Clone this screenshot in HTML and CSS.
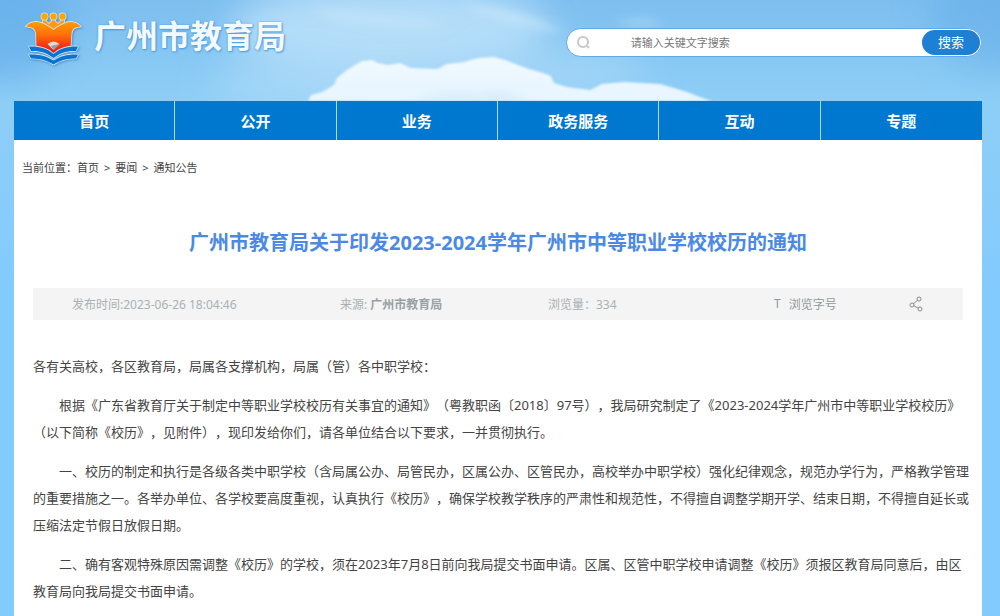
FILE: index.html
```
<!DOCTYPE html>
<html lang="zh-CN">
<head>
    <meta charset="UTF-8">
    <meta name="viewport" content="width=device-width, initial-scale=1.0">
    <title>广州市教育局</title>
    <link rel="stylesheet" href="styles.css">
</head>
<body>
    <!-- 天空背景 -->
    <svg class="sky" viewBox="0 0 1000 101" preserveAspectRatio="xMidYMin slice" aria-hidden="true">
        <defs>
            <filter id="haze" x="-50%" y="-100%" width="200%" height="300%"><feGaussianBlur stdDeviation="18"/></filter>
            <filter id="wisp" x="-50%" y="-100%" width="200%" height="300%"><feGaussianBlur stdDeviation="5"/></filter>
            <filter id="edge"><feGaussianBlur stdDeviation="0.8"/></filter>
            <linearGradient id="cloud" x1="0" y1="0" x2="0" y2="1">
                <stop offset="0" stop-color="#f0f9ff"/>
                <stop offset="1" stop-color="#e6f5ff"/>
            </linearGradient>
        </defs>
        <ellipse cx="0" cy="20" rx="70" ry="60" fill="#5fabea" opacity="0.6" filter="url(#haze)"/>
        <ellipse cx="1000" cy="10" rx="70" ry="60" fill="#66b0ea" opacity="0.6" filter="url(#haze)"/>
        <ellipse cx="390" cy="30" rx="160" ry="50" fill="#b9e0f9" opacity="0.9" filter="url(#haze)"/>
        <ellipse cx="290" cy="85" rx="80" ry="20" fill="#b4def9" opacity="0.7" filter="url(#haze)"/>
        <ellipse cx="560" cy="72" rx="90" ry="20" fill="#b0dbf8" opacity="0.7" filter="url(#haze)"/>
        <path d="M310 8Q400 12 450 24Q400 34 330 20Z" fill="#c8e6fb" opacity="0.5" filter="url(#wisp)"/>
        <path d="M460 5Q520 8 565 32Q510 28 460 5Z" fill="#cde9fc" opacity="0.6" filter="url(#wisp)"/>
        <path d="M615 22Q645 14 665 24Q640 30 615 22Z" fill="#b6dcf8" opacity="0.6" filter="url(#wisp)"/>
        <path d="M308 101L311 95L322 92L334 85L337 78L347 70L355 65L362 61L372 60L378 63L388 65L400 63L411 68L437 69L447 64L464 62L478 58L494 57L505 60L518 65L529 69L540 72L551 76L554 83L567 87L590 90L602 84L624 82L643 83L660 84L674 88L687 92L700 97L712 101Z" fill="url(#cloud)" filter="url(#edge)"/>
        <path d="M415 101Q440 90 480 95Q500 88 530 101Z" fill="#c3e3f8" opacity="0.6" filter="url(#wisp)"/>
    </svg>

    <div class="page">
        <!-- 页头 -->
        <header class="header">
            <a class="logo" href="#">
                <svg class="logo-mark" viewBox="0 0 60 54" aria-hidden="true">
                    <defs>
                        <linearGradient id="flower" x1="0" y1="0" x2="0" y2="1">
                            <stop offset="0" stop-color="#ff9e00"/>
                            <stop offset="0.4" stop-color="#ff6f0a"/>
                            <stop offset="0.9" stop-color="#f31a12"/>
                        </linearGradient>
                    </defs>
                    <g stroke="#cfe6f7" stroke-width="1.6" stroke-linejoin="round" paint-order="stroke">
                        <path d="M18 17L20 9V5H23V9L26 12L29 9V5H32V9L35 12L38 9V5H41V9L43 17Z" fill="#ff9a14"/>
                        <circle cx="21.500" cy="4.500" r="3.200" fill="#ffa500"/>
                        <circle cx="30.500" cy="4.500" r="3.200" fill="#ffa500"/>
                        <circle cx="39.500" cy="4.500" r="3.200" fill="#ffa500"/>
                        <path d="M3 14.500C7 9 15 9 20 11.500C24 13.500 27 15 30.500 18C34 15 37 13.500 41 11.500C46 9 53 9 58 14.500C51 15 49 17 48.500 22L47.500 35L37 37L30.500 42L24 37L13.500 35L13 22C12.500 17 10 15 3 14.500Z" fill="url(#flower)"/>
                        <path d="M6 34.500C15 34 24 36 30.500 42C37 36 46 34 55 34.500L53 39C44 38.500 37 41 30.500 46C24 41 17 38.500 8 39Z" fill="#0874d1"/>
                        <path d="M6 42.500C15 42 24 44 30.500 48.500C37 44 46 42 55 42.500L53 46.500C44 46 36 49 30.500 52.500C25 49 17 46 8 46.500Z" fill="#0874d1"/>
                    </g>
                    <path d="M24.500 32Q30.500 27 36.500 32L30.500 38Z" fill="#dcdcd8"/>
                    <path d="M28 34L36.500 32L30.500 38Z" fill="#9a9a96"/>
                </svg>
                <span class="logo-text">广州市教育局</span>
            </a>
            <form class="search">
                <svg class="search-icon" viewBox="0 0 14 14" aria-hidden="true">
                    <circle cx="6" cy="6" r="5"/>
                    <path d="M10 10L12 12"/>
                </svg>
                <input class="search-input" type="text" placeholder="请输入关键文字搜索" aria-label="请输入关键文字搜索">
                <button class="search-button" type="button">搜索</button>
            </form>
        </header>

        <!-- 导航栏 -->
        <nav class="navbar">
            <a href="#">首页</a>
            <a href="#">公开</a>
            <a href="#">业务</a>
            <a href="#">政务服务</a>
            <a href="#">互动</a>
            <a href="#">专题</a>
        </nav>

        <!-- 主要内容 -->
        <main class="content">
            <div class="breadcrumb">当前位置：<a href="#">首页</a><span>&gt;</span><a href="#">要闻</a><span>&gt;</span><a href="#">通知公告</a></div>

            <h1 class="title">广州市教育局关于印发2023-2024学年广州市中等职业学校校历的通知</h1>

            <div class="meta">
                <span>发布时间:2023-06-26 18:04:46</span>
                <span>来源: <b>广州市教育局</b></span>
                <span>浏览量：334</span>
                <button class="meta-button" type="button"><span>T</span>浏览字号</button>
                <button class="meta-button" type="button" aria-label="分享">
                    <svg class="share-icon" viewBox="0 0 14 16" aria-hidden="true">
                        <circle cx="10" cy="3" r="2"/>
                        <circle cx="3" cy="9" r="2"/>
                        <circle cx="11" cy="13" r="2"/>
                        <path d="M8.500 4.300L4.500 7.700M5 9.800L9.100 12.200"/>
                    </svg>
                </button>
            </div>

            <article class="article">
                <p class="salutation">各有关高校，各区教育局，局属各支撑机构，局属（管）各中职学校：</p>
                <p>根据《广东省教育厅关于制定中等职业学校校历有关事宜的通知》（粤教职函〔2018〕97号），我局研究制定了《2023-2024学年广州市中等职业学校校历》（以下简称《校历》，见附件），现印发给你们，请各单位结合以下要求，一并贯彻执行。</p>
                <p>一、校历的制定和执行是各级各类中职学校（含局属公办、局管民办，区属公办、区管民办，高校举办中职学校）强化纪律观念，规范办学行为，严格教学管理的重要措施之一。各举办单位、各学校要高度重视，认真执行《校历》，确保学校教学秩序的严肃性和规范性，不得擅自调整学期开学、结束日期，不得擅自延长或压缩法定节假日放假日期。</p>
                <p>二、确有客观特殊原因需调整《校历》的学校，须在2023年7月8日前向我局提交书面申请。区属、区管中职学校申请调整《校历》须报区教育局同意后，由区教育局向我局提交书面申请。</p>
            </article>
        </main>
    </div>
</body>
</html>
```
FILE: styles.css
```
/* 重置样式 */
* {
    margin: 0;
    padding: 0;
    box-sizing: border-box;
}

body {
    position: relative;
    font-family: 'Noto Sans', 'Noto Sans CJK SC', sans-serif;
    font-size: 13px;
    color: #444;
    background: #82cbff linear-gradient(to bottom, #7dbeef 0, #8ecef6 100px, #82cbff 300px) no-repeat;
    text-spacing-trim: space-all;
}

a {
    color: inherit;
    text-decoration: none;
}

button,
input {
    font-family: inherit;
    border: none;
    background: none;
}

button {
    cursor: pointer;
}

/* 天空背景 */
.sky {
    position: absolute;
    top: 0;
    left: 0;
    width: 100%;
    height: 101px;
    z-index: -1;
}

.page {
    padding: 0 18px 0 14px;
}

/* 页头 */
.header {
    display: flex;
    justify-content: space-between;
    align-items: flex-start;
    height: 101px;
    padding-top: 12px;
}

.logo {
    display: flex;
    gap: 11px;
    padding-left: 9px;
}

.logo-mark {
    width: 60px;
    height: 54px;
    overflow: visible;
    filter: drop-shadow(1px 1px 1px rgba(40, 100, 160, 0.5));
}

.logo-text {
    font-size: 32px;
    font-weight: bold;
    line-height: 48px;
    color: #f4f9ff;
    text-shadow: 0 0 2px #4a9bdc, 1px 1px 2px #4a9bdc;
}

/* 搜索框 */
.search {
    display: flex;
    align-items: center;
    width: 43%;
    height: 29px;
    margin-top: 16px;
    padding: 0 1px 0 10px;
    background-color: white;
    border: 1px solid #5ea9ea;
    border-radius: 15px;
}

.search-icon {
    width: 14px;
    height: 14px;
    fill: none;
    stroke: #c8c8c8;
    stroke-width: 2;
}

.search-input {
    flex: 1;
    min-width: 0;
    padding-left: 40px;
    font-size: 11px;
    outline: none;
}

.search-input::placeholder {
    color: #777;
}

.search-button {
    width: 58px;
    height: 25px;
    font-size: 13px;
    line-height: 25px;
    color: white;
    background-color: #1e80d4;
    border-radius: 13px;
}

/* 导航栏 */
.navbar {
    display: grid;
    grid-template-columns: repeat(6, 1fr);
    background-color: #0078cf;
}

.navbar a {
    font-size: 15px;
    font-weight: bold;
    line-height: 38px;
    padding-top: 1px;
    text-align: center;
    color: white;
    border-right: 1px solid #b5d9f2;
}

.navbar a:last-child {
    border-right: none;
}

/* 主要内容 */
.content {
    padding-bottom: 24px;
    background-color: white;
}

.breadcrumb {
    padding: 20px 8px 0;
    font-size: 11px;
    line-height: 16px;
}

.breadcrumb span {
    margin: 0 5px;
}

.title {
    padding: 52px 19px 30px;
    font-size: 20px;
    line-height: 30px;
    text-align: center;
    color: #4b89e4;
}

.meta {
    display: grid;
    grid-template-columns: 268fr 208fr 226fr 135fr 54fr;
    align-items: center;
    height: 32px;
    margin: 0 19px;
    padding-left: 39px;
    font-size: 12px;
    color: #a9b1b4;
    background-color: #f4f4f4;
}

.meta b {
    color: #98a2a6;
}

.meta-button {
    display: flex;
    gap: 8px;
    font-size: 12px;
    color: #8f999d;
}

.share-icon {
    width: 14px;
    height: 16px;
    fill: none;
    stroke: #8a8a8a;
}

/* 正文 */
.article {
    padding: 33px 9px 0 19px;
}

.article p {
    margin-bottom: 12px;
    line-height: 27px;
    text-indent: 2em;
}

.article .salutation {
    text-indent: 0;
}
```
